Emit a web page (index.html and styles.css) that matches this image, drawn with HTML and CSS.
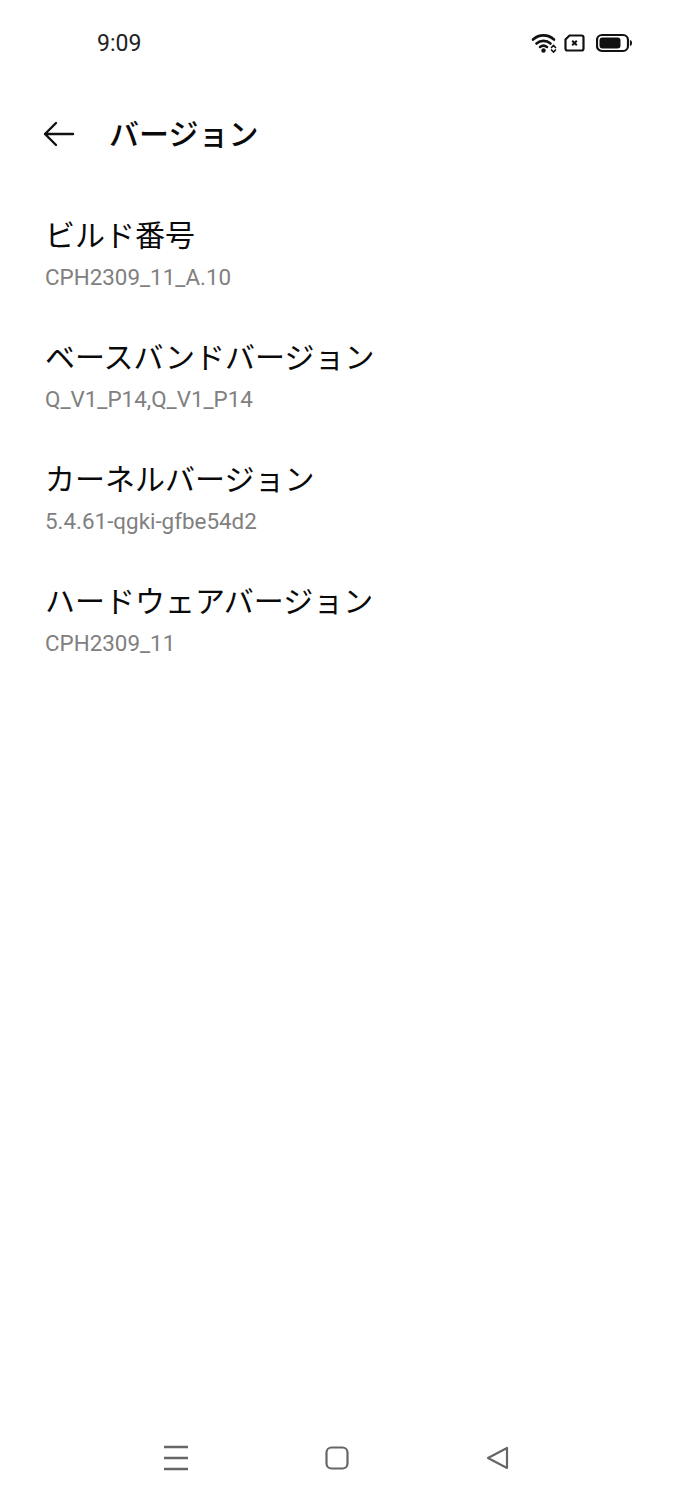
FILE: index.html
```html
<!DOCTYPE html>
<html>
<head>
  <meta charset="UTF-8">
  <title>バージョン</title>
  <link rel="stylesheet" href="styles.css">
</head>
<body>
  <div class="phone">
    <div class="status-bar">
      <span class="clock">9:09</span>
      <div class="status-icons">
        <svg class="icon-wifi" width="26" height="22" viewBox="0 0 26 22" fill="none" stroke="#111" stroke-linecap="round">
          <path d="M2 7.500C8 2 17 2 23 7.500" stroke-width="2.600"/>
          <path d="M5.500 11.500C9.500 8 15.500 8 19.500 11.500" stroke-width="2.600"/>
          <path d="M9 15C11 13.500 14 13.500 16 15" stroke-width="2.600"/>
          <circle cx="12.500" cy="18.500" r="2.200" fill="#111" stroke="none"/>
          <path d="M20.500 15.500L22.500 13.500L24.500 15.500M20.500 18L22.500 20L24.500 18" stroke-width="1.700"/>
        </svg>
        <svg width="21" height="18" viewBox="0 0 21 18" fill="none" stroke="#111">
          <path d="M5.500 1.500H17.500C18.600 1.500 19.500 2.400 19.500 3.500V14.500C19.500 15.600 18.600 16.500 17.500 16.500H3.500C2.400 16.500 1.500 15.600 1.500 14.500V5.500Z" stroke-width="2.200"/>
          <path d="M8.200 6.800L12.800 11.200M12.800 6.800L8.200 11.200" stroke-width="2"/>
        </svg>
        <svg class="icon-battery" width="37" height="20" viewBox="0 0 37 20">
          <rect x="1" y="2" width="31" height="16" rx="5" fill="none" stroke="#111" stroke-width="2.200"/>
          <rect x="3.500" y="4.500" width="21" height="11" rx="3" fill="#111"/>
          <path d="M34 7C35.500 7.300 36 8.500 36 10C36 11.500 35.500 12.700 34 13Z" fill="#111"/>
        </svg>
      </div>
    </div>

    <div class="title-bar">
      <svg class="back" width="32" height="26" viewBox="0 0 32 26" fill="none" stroke="#111" stroke-width="2.400" stroke-linecap="round" stroke-linejoin="round">
        <path d="M30 13H2M13 2L2 13L13 24"/>
      </svg>
      <h1>バージョン</h1>
    </div>

    <div class="list">
      <div class="item">
        <div class="item-title">ビルド番号</div>
        <div class="item-value">CPH2309_11_A.10</div>
      </div>
      <div class="item">
        <div class="item-title">ベースバンドバージョン</div>
        <div class="item-value">Q_V1_P14,Q_V1_P14</div>
      </div>
      <div class="item">
        <div class="item-title">カーネルバージョン</div>
        <div class="item-value">5.4.61-qgki-gfbe54d2</div>
      </div>
      <div class="item">
        <div class="item-title">ハードウェアバージョン</div>
        <div class="item-value">CPH2309_11</div>
      </div>
    </div>

    <div class="nav-bar">
      <svg width="24" height="26" viewBox="0 0 24 26" fill="none" stroke="#666" stroke-width="2.400">
        <path d="M0 2H24M0 13H24M0 24H24"/>
      </svg>
      <svg width="24" height="24" viewBox="0 0 24 24" fill="none" stroke="#666" stroke-width="2.200">
        <rect x="1.500" y="1.500" width="21" height="21" rx="5"/>
      </svg>
      <svg width="24" height="24" viewBox="0 0 24 24" fill="none" stroke="#666" stroke-width="2.200" stroke-linejoin="round">
        <path d="M2 12L21 2V22Z"/>
      </svg>
    </div>
  </div>
</body>
</html>
```

FILE: styles.css
```css
body {
  margin: 0;
  background-color: #fff;
  color: #111;
  font-family: Roboto, "Noto Sans CJK JP", sans-serif;
}
.phone {
  display: flex;
  flex-direction: column;
  height: 1500px;
  overflow: hidden;
}
.status-bar {
  display: flex;
  justify-content: space-between;
  align-items: center;
  height: 30px;
  padding: 28px 42px 0 97px;
}
.clock {
  font-size: 23px;
  color: #222;
}
.status-icons {
  display: flex;
  align-items: center;
  gap: 7px;
}
.icon-battery {
  margin-left: 4px;
}
.title-bar {
  display: flex;
  align-items: center;
  gap: 34px;
  margin-top: 46px;
  padding-left: 43px;
  height: 60px;
}
h1 {
  margin: 0 0 4px;
  font-size: 30px;
  font-weight: 500;
  color: #0a0a0a;
}
.list {
  display: flex;
  flex-direction: column;
  gap: 42px;
  margin-top: 50px;
  padding-left: 45px;
}
.item-title {
  font-size: 30px;
  line-height: 44px;
  color: #0a0a0a;
}
.item-value {
  font-size: 22.4px;
  line-height: 34px;
  margin-top: 2px;
  color: #808080;
}
.nav-bar {
  display: flex;
  justify-content: space-between;
  align-items: center;
  margin-top: auto;
  margin-bottom: 29px;
  padding: 0 165px 0 164px;
}
```
